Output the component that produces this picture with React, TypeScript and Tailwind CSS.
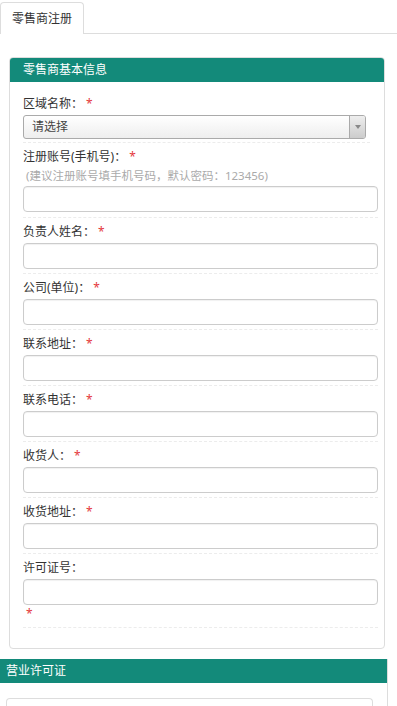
const fieldsAfter = [
  { label: "负责人姓名：", required: true },
  { label: "公司(单位)：", required: true },
  { label: "联系地址：", required: true },
  { label: "联系电话：", required: true },
  { label: "收货人：", required: true },
  { label: "收货地址：", required: true },
];

function Star() {
  return <span className="ml-[3px] text-[#e4393c]">*</span>;
}

function Field({ label, required }: { label: string; required: boolean }) {
  return (
    <div className="border-b border-dashed border-[#ececec] pt-[6px] pb-[4px]">
      <div className="h-[16px] leading-[16px] text-[12px] text-[#333]">
        {label}
        {required && <Star />}
      </div>
      <input
        type="text"
        className="mt-[3px] block h-[26px] w-full rounded-[4px] border border-[#ccc] bg-white shadow-[inset_0_1px_1px_rgba(0,0,0,0.06)] outline-none"
      />
    </div>
  );
}

export default function App() {
  return (
    <div
      className="min-h-screen w-[397px] bg-white text-[#333]"
      style={{ fontFamily: '"Noto Sans", "Noto Sans CJK SC", sans-serif' }}
    >
      {/* tabs */}
      <div className="flex h-[34px] items-end border-b border-[#ddd]">
        <div className="-mb-px flex h-[32px] items-center rounded-t-[4px] border border-b-0 border-[#ddd] bg-white px-[11px] text-[12px] text-[#333]">
          零售商注册
        </div>
      </div>

      {/* panel 1 */}
      <div className="ml-[9px] mr-[12px] mt-[23px] rounded-[4px] border border-[#ddd]">
        <div className="flex h-[24px] items-center rounded-t-[3px] bg-[#138a7a] pl-[13px] text-[12px] text-white">
          零售商基本信息
        </div>
        <div className="pl-[13px] pr-[6px] pt-[8px] pb-[20px]">
          {/* select row */}
          <div className="mr-[8px] border-b border-dashed border-[#ececec] pt-[6px] pb-[3px]">
            <div className="h-[16px] leading-[16px] text-[12px] text-[#333]">
              区域名称：
              <Star />
            </div>
            <div className="mr-[4px] mt-[3px] flex h-[24px] overflow-hidden rounded-[3px] border border-[#aaa] bg-gradient-to-b from-white to-[#eee]">
              <div className="flex flex-1 items-center pl-[8px] text-[12px] text-[#444]">
                请选择
              </div>
              <div className="flex w-[16px] items-center justify-center border-l border-[#aaa] bg-gradient-to-b from-[#eee] to-[#ccc]">
                <div className="h-0 w-0 border-x-[3px] border-t-[4px] border-x-transparent border-t-[#888]" />
              </div>
            </div>
          </div>

          {/* account row */}
          <div className="border-b border-dashed border-[#ececec] pt-[6px] pb-[5px]">
            <div className="h-[16px] leading-[16px] text-[12px] text-[#333]">
              注册账号(手机号)：
              <Star />
            </div>
            <div className="mt-[3px] h-[16px] pl-[3px] leading-[16px] text-[11.5px] text-[#aaa]">
              (建议注册账号填手机号码，默认密码：123456)
            </div>
            <input
              type="text"
              className="mt-[2px] block h-[26px] w-full rounded-[4px] border border-[#ccc] bg-white shadow-[inset_0_1px_1px_rgba(0,0,0,0.06)] outline-none"
            />
          </div>

          {fieldsAfter.map((f) => (
            <Field key={f.label} label={f.label} required={f.required} />
          ))}

          {/* license row */}
          <div className="border-b border-dashed border-[#ececec] pt-[6px] pb-[6px]">
            <div className="h-[16px] leading-[16px] text-[12px] text-[#333]">
              许可证号：
            </div>
            <input
              type="text"
              className="mt-[3px] block h-[26px] w-full rounded-[4px] border border-[#ccc] bg-white shadow-[inset_0_1px_1px_rgba(0,0,0,0.06)] outline-none"
            />
            <div className="mt-[2px] h-[14px] pl-[3px] text-[12px] leading-[14px] text-[#e4393c]">
              *
            </div>
          </div>
        </div>
      </div>

      {/* panel 2 */}
      <div className="mt-[10px] mr-[9px] border-r border-[#ddd]">
        <div className="flex h-[24px] items-center bg-[#138a7a] pl-[6px] text-[12px] text-white">
          营业许可证
        </div>
        <div className="px-[6px] pt-[15px]">
          <div className="mr-[8px] h-[40px] rounded-t-[4px] border border-b-0 border-[#ddd]" />
        </div>
      </div>
    </div>
  );
}
